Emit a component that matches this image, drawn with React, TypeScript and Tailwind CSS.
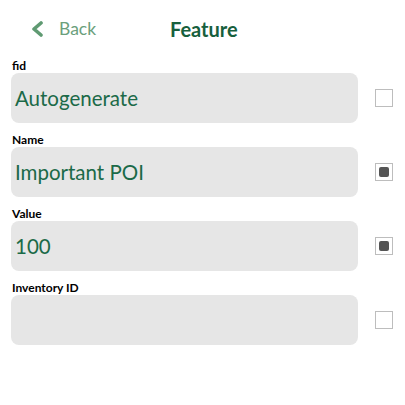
import React from "react";

const fields = [
  { label: "fid", value: "Autogenerate", checked: false },
  { label: "Name", value: "Important POI", checked: true },
  { label: "Value", value: "100", checked: true },
  { label: "Inventory ID", value: "", checked: false },
];

function Checkbox({ checked }: { checked: boolean }) {
  return (
    <div className="w-[18px] h-[18px] border border-[#bdbdbd] bg-white flex items-center justify-center">
      {checked && <div className="w-[10px] h-[10px] rounded-[2px] bg-[#555555]" />}
    </div>
  );
}

export default function App() {
  return (
    <div
      className="w-[405px] h-[405px] bg-white overflow-hidden"
      style={{ fontFamily: "Lato, 'Noto Sans', sans-serif" }}
    >
      <div className="h-[58px] flex items-center relative">
        <div className="flex items-center pl-[30px]">
          <svg width="14" height="16" viewBox="0 0 14 16" className="mr-[15px]">
            <path d="M11 2 L4 8 L11 14" fill="none" stroke="#5f9a72" strokeWidth="3.6" strokeLinecap="round" strokeLinejoin="round" />
          </svg>
          <span className="text-[17.5px] text-[#6b9f7c] leading-none">Back</span>
        </div>
        <div className="absolute left-[170px] top-[19px] text-[20px] font-bold text-[#17603d] leading-none">
          Feature
        </div>
      </div>
      <div className="flex flex-col">
        {fields.map((f) => (
          <div key={f.label} className="h-[74px] flex flex-col">
            <div className="pl-[12px] text-[12px] font-bold text-black leading-[15px]">{f.label}</div>
            <div className="flex items-center">
              <div className="ml-[11px] w-[347px] h-[50px] rounded-[8px] bg-[#e6e6e6] flex items-center pl-[4px]">
                <span className="text-[20.5px] text-[#1b6a48] leading-none">{f.value}</span>
              </div>
              <div className="ml-[17px]">
                <Checkbox checked={f.checked} />
              </div>
            </div>
          </div>
        ))}
      </div>
    </div>
  );
}
